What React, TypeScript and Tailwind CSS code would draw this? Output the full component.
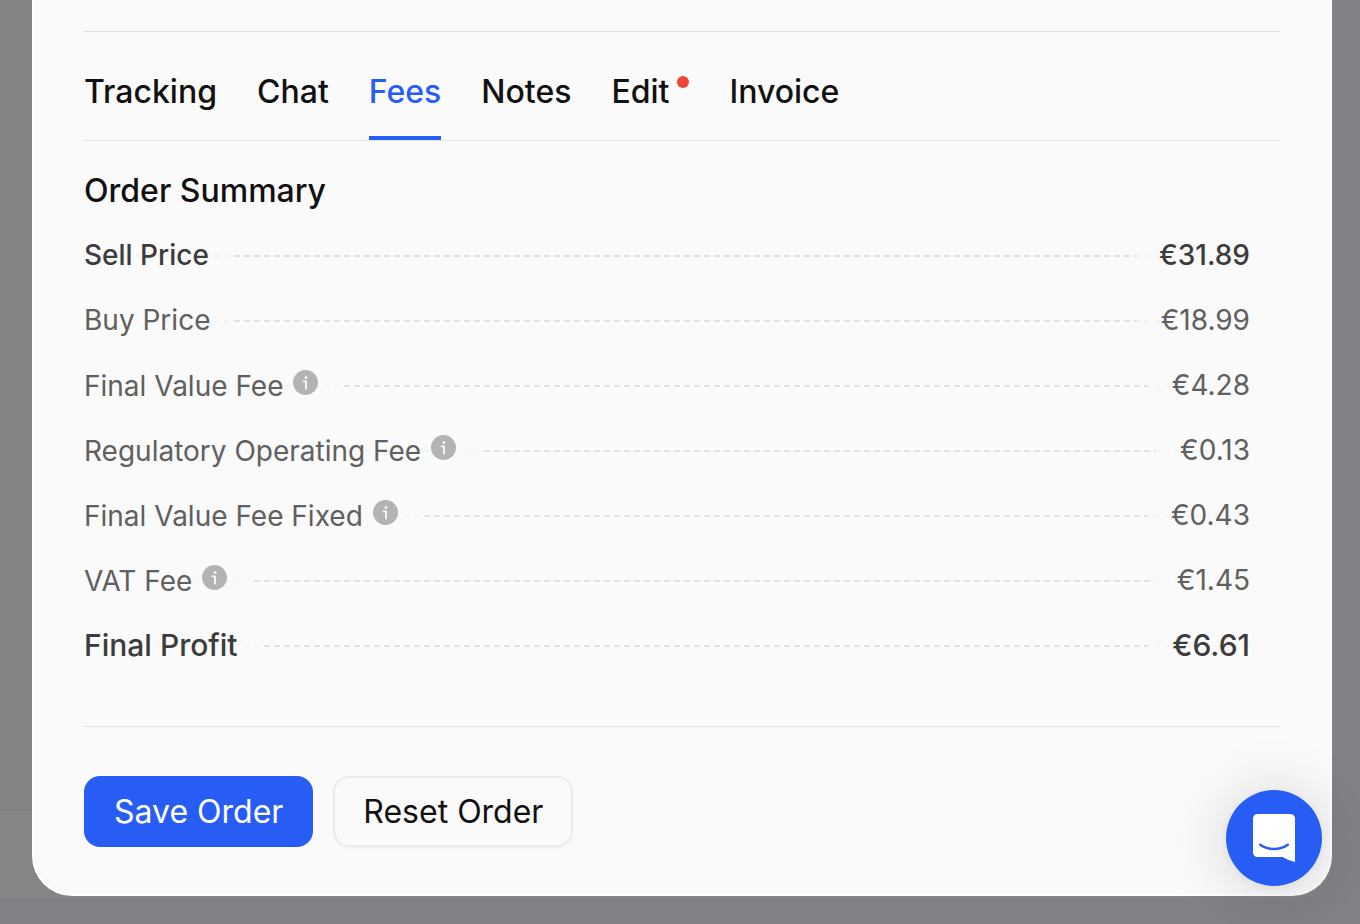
import React, { useState } from "react";
import clsx from "clsx";

interface Tab {
  name: string;
  hasAlert?: boolean;
}

interface Fee {
  label: string;
  amount: number;
  variant?: "strong" | "total";
  info?: boolean;
}

const TABS: Tab[] = [
  { name: "Tracking" },
  { name: "Chat" },
  { name: "Fees" },
  { name: "Notes" },
  { name: "Edit", hasAlert: true },
  { name: "Invoice" },
];

const FEES: Fee[] = [
  { label: "Sell Price", amount: 31.89, variant: "strong" },
  { label: "Buy Price", amount: 18.99 },
  { label: "Final Value Fee", amount: 4.28, info: true },
  { label: "Regulatory Operating Fee", amount: 0.13, info: true },
  { label: "Final Value Fee Fixed", amount: 0.43, info: true },
  { label: "VAT Fee", amount: 1.45, info: true },
  { label: "Final Profit", amount: 6.61, variant: "total" },
];

const formatCurrency = (value: number) => `€${value.toFixed(2)}`;

const InfoIcon = () => (
  <svg viewBox="0 0 25 25" className="size-[25px]" aria-hidden="true">
    <circle cx="12.5" cy="12.5" r="12.5" fill="#b2b4b4" />
    <circle cx="13" cy="7.6" r="1.4" fill="#fafafa" />
    <path d="M10.500 11.300H13V18.600" fill="none" stroke="#fafafa" strokeWidth="1.8" strokeLinecap="round" strokeLinejoin="round" />
  </svg>
);

const ChatIcon = () => (
  <svg viewBox="0 0 42 48" className="h-12 w-[42px]" aria-hidden="true">
    <path d="M4.500 0H37.500A4.500 4.500 0 0 1 42 4.500V48C38 47 33 45 29.500 43H4.500A4.500 4.500 0 0 1 0 38.500V4.500A4.500 4.500 0 0 1 4.500 0Z" fill="#fff" />
    <path d="M7.200 30.800C15 36.400 27 36.400 34.800 30.800" fill="none" stroke="#275df5" strokeWidth="2.600" strokeLinecap="round" />
  </svg>
);

const TabBar: React.FC<{ active: string; onSelect: (name: string) => void }> = ({ active, onSelect }) => (
  <nav className="flex gap-10 border-y border-[#e1e1e1]">
    {TABS.map((tab) => (
      <button
        key={tab.name}
        type="button"
        onClick={() => onSelect(tab.name)}
        className={clsx(
          "flex items-start gap-2 border-b-4 pt-10 pb-6 text-[32px] leading-10 font-medium cursor-pointer",
          tab.name === active ? "border-[#275df5] text-[#275df5]" : "border-transparent"
        )}
      >
        {tab.name}
        {tab.hasAlert && <span className="mt-1 size-3 rounded-full bg-[#ef4538]" />}
      </button>
    ))}
  </nav>
);

const FeeRow: React.FC<{ fee: Fee }> = ({ fee }) => (
  <div
    className={clsx(
      "flex h-[65px] items-center justify-between bg-[repeating-linear-gradient(to_right,#e2e2e2_0px_6px,transparent_6px_10px)] bg-[length:100%_2px] bg-[position:0_center] bg-no-repeat leading-8",
      fee.variant ? "font-medium text-[#3c3c3c]" : "text-[#606060]",
      fee.variant === "total" ? "text-[30px]" : "text-[28px]"
    )}
  >
    <dt className={clsx("flex items-start gap-2.5 bg-[#fafafa]/80 pr-6", !fee.info && "pb-0.5")}>
      {fee.label}
      {fee.info && (
        <button type="button" aria-label={`About ${fee.label}`} className="cursor-pointer">
          <InfoIcon />
        </button>
      )}
    </dt>
    <dd className="bg-[#fafafa]/80 pb-0.5 pl-6">{formatCurrency(fee.amount)}</dd>
  </div>
);

export default function App() {
  const [active, setActive] = useState("Fees");

  return (
    <div className="relative min-h-screen bg-[#818286] pr-7 pb-7 pl-8 font-['Inter',sans-serif] text-[#111]">
      {/* dimmed page behind the dialog */}
      <div className="absolute top-0 right-7 bottom-[26px] left-0 flex flex-col rounded-br-[36px] bg-[#828384]">
        <div className="flex-1" />
        <div className="h-22 rounded-br-[36px] border-t border-[#7f8081] bg-[#848586]" />
      </div>

      <main className="relative rounded-b-[40px] border-2 border-t-0 border-white bg-[#fafafa] px-[50px] pt-[31px] pb-[47px]">
        <TabBar active={active} onSelect={setActive} />

        <section>
          <h2 className="mt-[30px] mb-3 text-[32px] leading-10 font-medium">Order Summary</h2>
          <dl className="pr-[30px]">
            {FEES.map((fee) => (
              <FeeRow key={fee.label} fee={fee} />
            ))}
          </dl>
        </section>

        <div className="mt-12 flex gap-5 border-t border-[#e1e1e1] pt-[49px] text-[32px] leading-10">
          <button type="button" className="h-[71px] cursor-pointer rounded-2xl bg-[#275df5] px-[30px] text-white">
            Save Order
          </button>
          <button
            type="button"
            className="h-[71px] cursor-pointer rounded-2xl border-2 border-[#ececec] px-7 shadow-xs"
          >
            Reset Order
          </button>
        </div>
      </main>

      <button
        type="button"
        aria-label="Open chat"
        className="fixed right-[38px] bottom-[38px] flex size-24 cursor-pointer items-center justify-center rounded-full bg-[#275df5] shadow-[0_2px_12px_rgba(0,0,0,0.06),0_4px_64px_rgba(0,0,0,0.16)]"
      >
        <ChatIcon />
      </button>
    </div>
  );
}
